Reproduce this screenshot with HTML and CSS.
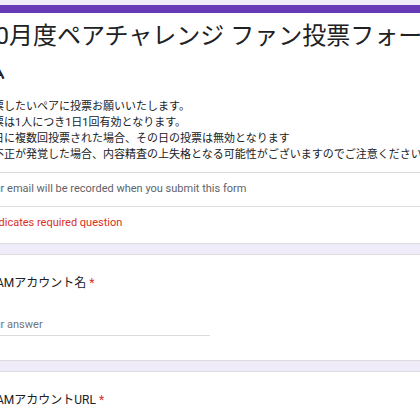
FILE: index.html
```html
<!DOCTYPE html>
<html lang="ja">
<head>
  <meta charset="UTF-8" />
  <meta name="viewport" content="width=device-width, initial-scale=1.0"/>
  <title>10月度ペアチャレンジ ファン投票フォーム</title>
  <link rel="stylesheet" href="styles.css">
</head>
<body>

  <div class="form">

    <div class="card header-card">
      <div class="head">
        <h1 class="form-title">10月度ペアチャレンジ ファン投票フォーム</h1>
        <div class="form-desc">
          <div>投票したいペアに投票お願いいたします。</div>
          <div>投票は1人につき1日1回有効となります。</div>
          <div>同日に複数回投票された場合、その日の投票は無効となります</div>
          <div>※不正が発覚した場合、内容精査の上失格となる可能性がございますのでご注意ください</div>
        </div>
      </div>
      <div class="notice email-note">Your email will be recorded when you submit this form</div>
      <div class="notice required-note">* Indicates required question</div>
    </div>

    <div class="card question">
      <div class="q-title">TEAMアカウント名 <span class="req">*</span></div>
      <div class="answer">Your answer</div>
    </div>

    <div class="card question">
      <div class="q-title">TEAMアカウントURL <span class="req">*</span></div>
      <div class="answer">Your answer</div>
    </div>

  </div>

</body>
</html>
```

FILE: styles.css
```css
html, body {
  overflow: hidden;
}
body {
  margin: 0;
  background: #f0ebf8;
  font-family: Roboto, "Noto Sans CJK JP", sans-serif;
  color: #202124;
}
.form {
  width: 490px;
  margin-left: -36px;
  padding-top: 5px;
  display: flex;
  flex-direction: column;
  gap: 10px;
}
.card {
  background: white;
  border: 1px solid #dadce0;
  border-radius: 6px;
  padding: 0 17px;
}
.header-card {
  border-top: 8px solid #673ab7;
  padding: 0;
}
.head {
  padding: 6px 17px 9px;
}
.form-title {
  margin: 0;
  font-size: 24px;
  font-weight: 400;
  line-height: 34px;
}
.form-desc {
  margin-top: 12px;
  font-size: 11px;
  line-height: 16px;
  white-space: nowrap;
}
.notice {
  border-top: 1px solid #dadce0;
  padding: 0 17px;
  font-size: 11px;
  line-height: 16px;
}
.email-note {
  color: #5f6368;
  padding-top: 8px;
  padding-bottom: 9px;
}
.required-note {
  color: #d93025;
  padding-top: 8px;
  padding-bottom: 12px;
}
.question {
  padding-top: 19px;
  padding-bottom: 24px;
}
.q-title {
  font-size: 12px;
  line-height: 18px;
}
.req {
  color: #d93025;
}
.answer {
  width: 228px;
  margin-top: 25px;
  padding-bottom: 2px;
  border-bottom: 1px solid #dadce0;
  font-size: 11px;
  line-height: 16px;
  color: #70757a;
}
```
